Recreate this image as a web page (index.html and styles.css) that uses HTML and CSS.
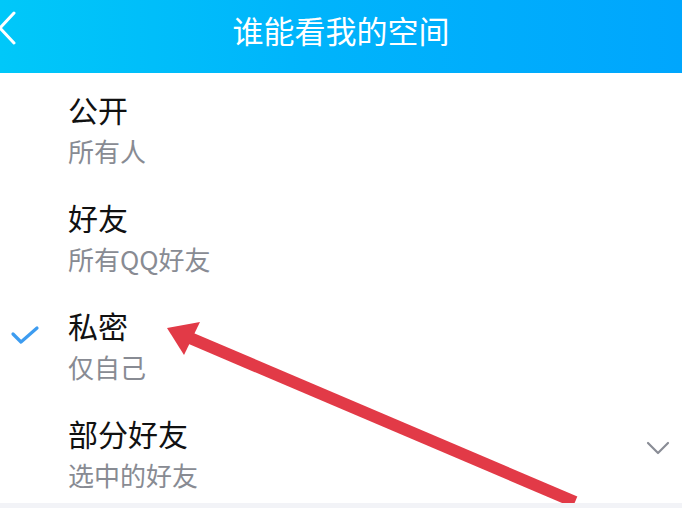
FILE: index.html
```html
<!DOCTYPE html>
<html lang="zh-CN">
<head>
<meta charset="utf-8">
<title>谁能看我的空间</title>
<link rel="stylesheet" href="styles.css">
</head>
<body>
<div class="screen">
  <header class="topbar">
    <svg class="back" width="20" height="36" viewBox="0 0 20 36"><polyline points="15,2 1,17 15,32" fill="none" stroke="#fff" stroke-width="3" stroke-linecap="round" stroke-linejoin="round"/></svg>
    <h1 class="title">谁能看我的空间</h1>
  </header>
  <ul class="list">
    <li class="row">
      <div class="check"></div>
      <div class="texts"><div class="main">公开</div><div class="sub">所有人</div></div>
    </li>
    <li class="row">
      <div class="check"></div>
      <div class="texts"><div class="main">好友</div><div class="sub">所有QQ好友</div></div>
    </li>
    <li class="row">
      <div class="check"><svg width="30" height="22" viewBox="0 0 30 22"><polyline points="3,9 11,17 27,3" fill="none" stroke="#3d9cf0" stroke-width="3.2" stroke-linecap="round" stroke-linejoin="round"/></svg></div>
      <div class="texts"><div class="main">私密</div><div class="sub">仅自己</div></div>
    </li>
    <li class="row">
      <div class="check"></div>
      <div class="texts"><div class="main">部分好友</div><div class="sub">选中的好友</div></div>
      <svg class="chev" width="28" height="18" viewBox="0 0 28 18"><polyline points="4,4 14,14 24,4" fill="none" stroke="#8a8d96" stroke-width="2.2" stroke-linecap="round" stroke-linejoin="round"/></svg>
    </li>
  </ul>
  <div class="strip"></div>
  <svg class="arrow" width="682" height="508" viewBox="0 0 682 508">
    <line x1="190" y1="338" x2="575" y2="502" stroke="#e23a47" stroke-width="12"/>
    <polygon points="167,328 200,322 184,355" fill="#e23a47"/>
  </svg>
</div>
</body>
</html>
```
FILE: styles.css
```css
* { box-sizing: border-box; }
html, body { margin: 0; padding: 0; background: #fff; }
body { font-family: "Noto Sans CJK SC", "Noto Sans", sans-serif; }
.screen { position: relative; width: 682px; height: 508px; overflow: hidden; background: #fff; }
.topbar {
  height: 73px;
  background: linear-gradient(90deg, #00c8f9 0%, #00b4fb 45%, #00a6fd 100%);
  display: flex; align-items: center; justify-content: center;
  position: relative;
}
.back { position: absolute; left: -1px; top: 11px; }
.title { margin: 0; color: #fff; font-weight: 400; font-size: 31px; line-height: 40px; margin-top: -14px; }
.list { list-style: none; margin: 0; padding: 0; }
.row { height: 108px; display: flex; align-items: flex-start; position: relative; }
.check { width: 68px; height: 108px; display: flex; align-items: center; padding-left: 10px; padding-top: 0; }
.check svg { margin-top: -15px; }
.texts { padding-top: 16px; }
.main { font-size: 30px; line-height: 40px; color: #111; }
.sub { font-size: 26px; line-height: 34px; color: #888b93; margin-top: 5px; }
.chev { position: absolute; right: 10px; top: 42px; }
.strip { height: 6px; background: #f2f3f7; margin-top: -2px; position: relative; z-index: 2; }
.arrow { position: absolute; left: 0; top: 0; pointer-events: none; z-index: 1; }
```
